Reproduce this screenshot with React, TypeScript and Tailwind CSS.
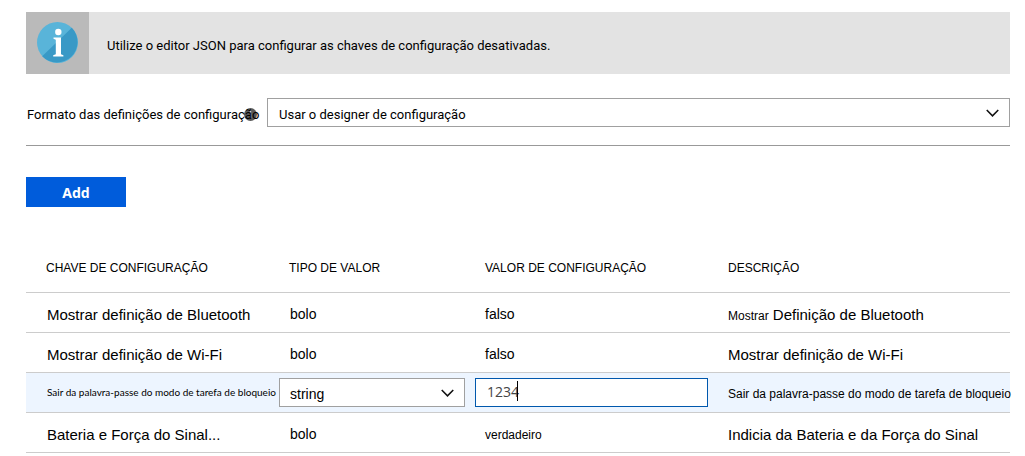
import React, { useState } from "react";

interface IConfigRow {
  key: string;
  type: string;
  value: string;
  editing?: boolean;
  keyClass: string;
  valueClass: string;
  description: React.ReactNode;
  descriptionClass: string;
}

const rows: IConfigRow[] = [
  {
    key: "Mostrar definição de Bluetooth",
    type: "bolo",
    value: "falso",
    keyClass: "pt-1.5 text-[15px]",
    valueClass: "pt-1 text-[14px]",
    description: (
      <>
        <span className="text-[12px]">Mostrar</span> Definição de Bluetooth
      </>
    ),
    descriptionClass: "pt-1.5 text-[15px]",
  },
  {
    key: "Mostrar definição de Wi-Fi",
    type: "bolo",
    value: "falso",
    keyClass: "pt-1.5 text-[15px]",
    valueClass: "pt-1 text-[14px]",
    description: "Mostrar definição de Wi-Fi",
    descriptionClass: "pt-1.5 text-[15px]",
  },
  {
    key: "Sair da palavra-passe do modo de tarefa de bloqueio",
    type: "string",
    value: "1234",
    editing: true,
    keyClass: "font-[Lato,sans-serif] text-[10px]",
    valueClass: "pt-1 text-[14px]",
    description: "Sair da palavra-passe do modo de tarefa de bloqueio",
    descriptionClass: "pt-1 text-[12px]",
  },
  {
    key: "Bateria e Força do Sinal...",
    type: "bolo",
    value: "verdadeiro",
    keyClass: "pt-1.5 text-[15px]",
    valueClass: "pt-1.5 text-[12px]",
    description: "Indicia da Bateria e da Força do Sinal",
    descriptionClass: "pt-1.5 text-[15px]",
  },
];

const Chevron = () => (
  <svg
    viewBox="0 0 14 8"
    className="pointer-events-none absolute right-[11px] top-[11px] h-2 w-[13px]"
    fill="none"
    stroke="#111"
    strokeWidth="1.7"
  >
    <path d="M0.8 0.8 L7 7 L13.2 0.8" />
  </svg>
);

const InfoLogo = () => (
  <svg viewBox="0 0 41 41" className="h-[41px] w-[41px]">
    <circle cx="20.5" cy="20.5" r="20.5" fill="#59b4d9" />
    <path d="M34.8 5.8 A20.5 20.5 0 0 1 5.2 34.2 Z" fill="#3999c6" />
    <circle cx="21.3" cy="10" r="3.2" fill="#fff" />
    <path
      d="M16.5 15.6 H24 V32.2 L26.4 33.2 V34.4 H16.2 V33.2 L18.8 32.2 V17.8 L16.5 16.8 Z"
      fill="#fff"
    />
  </svg>
);

const App = () => {
  const [format, setFormat] = useState("designer");
  const [valueType, setValueType] = useState("string");
  const [value, setValue] = useState("1234");

  return (
    <main className="bg-white pt-3 pr-[15px] pl-[26px] font-['Liberation_Sans',Arial,sans-serif] text-black">
      {/* Info banner */}
      <div className="flex bg-[#e3e3e3]">
        <div className="flex w-[63px] shrink-0 justify-center bg-[#bababa] pt-2.5 pb-[11px]">
          <InfoLogo />
        </div>
        <p className="self-center pt-1.5 pl-[18px] font-[Roboto,sans-serif] text-[13px]">
          Utilize o editor JSON para configurar as chaves de configuração
          desativadas.
        </p>
      </div>

      {/* Format picker */}
      <div className="flex items-center border-b border-[#999] pt-6 pb-[18px] font-[Roboto,sans-serif]">
        <div className="relative flex h-[29px] w-[241px] shrink-0 items-center pt-1 pl-px">
          <svg
            viewBox="0 0 13 13"
            className="absolute top-2.5 left-[218px] h-[13px] w-[13px]"
          >
            <circle cx="6.5" cy="6.5" r="6.5" fill="#5a5a5a" />
            <path d="M6.5 5.5 V10 M6.5 3 V4.4" stroke="#ccc" strokeWidth="1.4" />
          </svg>
          <label
            htmlFor="format"
            className="relative text-[13px] whitespace-nowrap"
          >
            Formato das definições de configuração
          </label>
        </div>
        <div className="relative flex-1">
          <select
            id="format"
            value={format}
            onChange={(e) => setFormat(e.target.value)}
            className="block h-[29px] w-full appearance-none border border-[#a0a0a0] bg-white pt-1 pl-[11px] text-[13px] outline-none"
          >
            <option value="designer">Usar o designer de configuração</option>
          </select>
          <Chevron />
        </div>
      </div>

      <button
        type="button"
        className="mt-[31px] block h-[30px] w-[100px] bg-[#005cdb] font-['Noto_Sans','Open_Sans',sans-serif] text-[14px] font-bold text-white"
      >
        Add
      </button>

      {/* Configuration keys */}
      <table className="mt-[35px] w-full table-fixed border-collapse text-left whitespace-nowrap">
        <colgroup>
          <col className="w-[243px]" />
          <col className="w-[196px]" />
          <col className="w-[243px]" />
          <col />
        </colgroup>
        <thead>
          <tr className="h-[50px] border-b border-[#ccc] text-[12px]">
            <th className="pt-0.5 pl-5 font-normal">CHAVE DE CONFIGURAÇÃO</th>
            <th className="pt-0.5 pl-5 font-normal">TIPO DE VALOR</th>
            <th className="pt-0.5 pl-5 font-normal">VALOR DE CONFIGURAÇÃO</th>
            <th className="pt-0.5 pl-5 font-normal">DESCRIÇÃO</th>
          </tr>
        </thead>
        <tbody>
          {rows.map((row) => (
            <tr
              key={row.key}
              className={`h-10 border-b border-[#ccc] ${row.editing ? "bg-[#edf5ff]" : ""}`}
            >
              <td className={`pl-[21px] ${row.keyClass}`}>{row.key}</td>
              {row.editing ? (
                <>
                  <td className="pl-2.5">
                    <div className="relative w-[186px]">
                      <select
                        aria-label="TIPO DE VALOR"
                        value={valueType}
                        onChange={(e) => setValueType(e.target.value)}
                        className="block h-[29px] w-full appearance-none border border-[#a0a0a0] bg-white pt-1 pl-2.5 text-[14px] outline-none"
                      >
                        <option value="string">string</option>
                      </select>
                      <Chevron />
                    </div>
                  </td>
                  <td className="pl-2.5">
                    <div className="relative">
                      <input
                        type="text"
                        aria-label="VALOR DE CONFIGURAÇÃO"
                        value={value}
                        onChange={(e) => setValue(e.target.value)}
                        className="block h-[29px] w-full border border-[#0058ad] bg-white pb-0.5 pl-[11px] font-['Open_Sans','Noto_Sans',sans-serif] text-[14px] text-[#444] caret-transparent outline-none"
                      />
                      <span className="absolute top-[3px] left-[42px] h-5 w-px bg-black" />
                    </div>
                  </td>
                </>
              ) : (
                <>
                  <td className="pt-1 pl-[21px] text-[14px]">{row.type}</td>
                  <td className={`pl-5 ${row.valueClass}`}>{row.value}</td>
                </>
              )}
              <td className={`pl-5 ${row.descriptionClass}`}>
                {row.description}
              </td>
            </tr>
          ))}
        </tbody>
      </table>
    </main>
  );
};

export default App;
